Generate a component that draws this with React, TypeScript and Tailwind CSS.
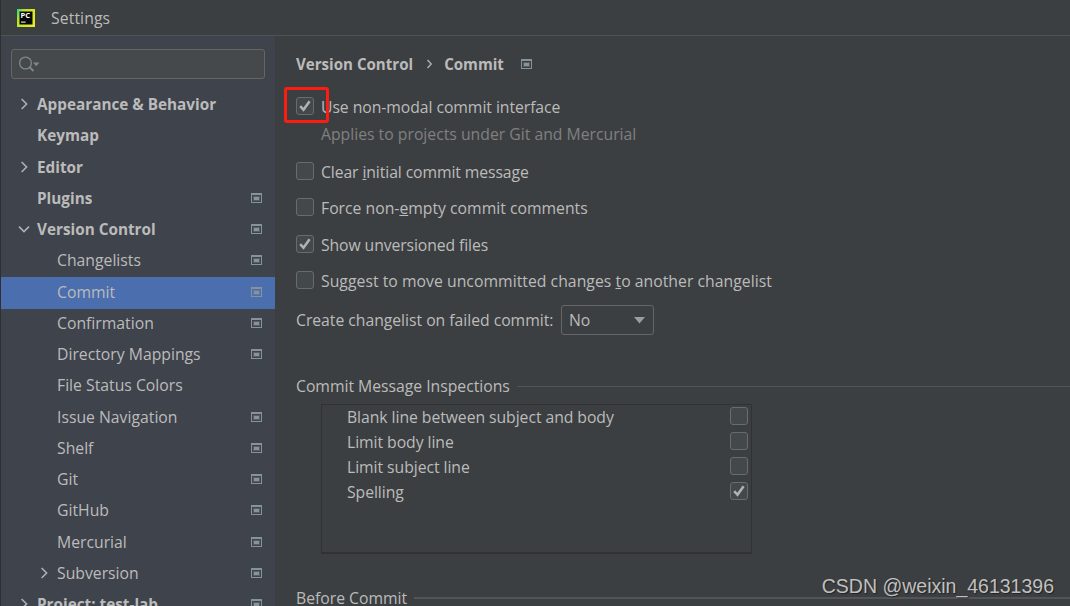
import React from "react";

type TreeItem = {
  label: string;
  level?: number;
  bold?: boolean;
  arrow?: "right" | "down";
  project?: boolean;
  selected?: boolean;
};

const treeItems: TreeItem[] = [
  { label: "Appearance & Behavior", bold: true, arrow: "right" },
  { label: "Keymap", bold: true },
  { label: "Editor", bold: true, arrow: "right" },
  { label: "Plugins", bold: true, project: true },
  { label: "Version Control", bold: true, arrow: "down", project: true },
  { label: "Changelists", level: 1, project: true },
  { label: "Commit", level: 1, project: true, selected: true },
  { label: "Confirmation", level: 1, project: true },
  { label: "Directory Mappings", level: 1, project: true },
  { label: "File Status Colors", level: 1 },
  { label: "Issue Navigation", level: 1, project: true },
  { label: "Shelf", level: 1, project: true },
  { label: "Git", level: 1, project: true },
  { label: "GitHub", level: 1, project: true },
  { label: "Mercurial", level: 1, project: true },
  { label: "Subversion", level: 1, arrow: "right", project: true },
  { label: "Project: test-lab", bold: true, arrow: "right", project: true },
];

const inspections = [
  { label: "Blank line between subject and body", checked: false },
  { label: "Limit body line", checked: false },
  { label: "Limit subject line", checked: false },
  { label: "Spelling", checked: true },
];

const PyCharmLogo = () => (
  <svg width="18" height="18" viewBox="0 0 18 18" className="shrink-0">
    <defs>
      <linearGradient id="pc" x1="0" y1="0" x2="1" y2="0.6">
        <stop offset="0" stopColor="#21d789" />
        <stop offset="0.3" stopColor="#b5e32c" />
        <stop offset="1" stopColor="#e6ea2b" />
      </linearGradient>
    </defs>
    <rect width="18" height="18" fill="url(#pc)" />
    <rect x="2.5" y="2.5" width="13" height="13" fill="#050805" />
    <text x="3.6" y="9" fontSize="7.6" fontWeight="700" fill="#fff" fontFamily="Open Sans, sans-serif">
      PC
    </text>
    <rect x="4" y="12.6" width="4.6" height="1" fill="#fff" />
  </svg>
);

const ProjectIcon = () => (
  <svg width="11" height="10" viewBox="0 0 11 10" className="shrink-0">
    <rect x="0.5" y="0.5" width="10" height="9" fill="none" stroke="#87939a" />
    <rect x="1" y="1" width="9" height="1" fill="#87939a" />
    <rect x="3" y="4" width="5" height="3" fill="#87939a" />
    <rect x="2.5" y="3.5" width="6" height="4" fill="none" stroke="#87939a" strokeOpacity="0.35" />
  </svg>
);

const Arrow = ({ dir }: { dir: "right" | "down" }) => (
  <svg width="12" height="12" viewBox="0 0 12 12" fill="none" stroke="#adb0b2" strokeWidth="1.6" className="shrink-0">
    {dir === "right" ? <path d="M3.6 1 8.6 6 3.6 11" /> : <path d="M1 3.6 6 8.6 11 3.6" />}
  </svg>
);

const Checkbox = ({ checked }: { checked?: boolean }) => (
  <span className="flex size-[18px] shrink-0 items-center justify-center rounded-[3px] border border-[#6b6b6b] bg-[#43494a]">
    {checked && (
      <svg width="16" height="16" viewBox="0 0 16 16" fill="none" stroke="#b0b2b3" strokeWidth="2.5">
        <path d="M3.2 8.1 6.5 11.8 12.6 3.2" />
      </svg>
    )}
  </span>
);

const Option = ({ checked, children }: { checked?: boolean; children: React.ReactNode }) => (
  <div className="flex h-[36.25px] items-center gap-[7px]">
    <Checkbox checked={checked} />
    <span className="pt-0.5">{children}</span>
  </div>
);

const Section = ({ title, line }: { title: string; line: string }) => (
  <div className="flex h-6 items-center gap-[7px]">
    <span className="tracking-[-0.02px]">{title}</span>
    <span className={`flex-1 bg-[#525557] ${line}`} />
  </div>
);

const Sidebar = () => (
  <aside className="w-[274px] shrink-0 overflow-hidden bg-[#3f434c]">
    <div className="mx-2.5 mt-[13px] flex h-[30px] items-center rounded-[3px] border border-[#646767] bg-[#45494a] px-[7px]">
      <svg width="22" height="16" viewBox="0 0 22 16" fill="none" stroke="#7c8890" strokeWidth="1.3">
        <circle cx="6.5" cy="7" r="5.9" />
        <path d="M10.4 11 14.5 15" strokeWidth="1.8" />
        <path d="M14 6.5h6.4l-3.2 3.8z" fill="#7c8890" stroke="none" />
      </svg>
    </div>
    <ul className="mt-[10.5px]">
      {treeItems.map((item) => (
        <li
          key={item.label}
          className={`flex items-center pr-[13px] ${
            item.selected ? "-mb-[0.75px] h-8 bg-[#4b6eaf] pb-[2.75px]" : "h-[31.25px] pb-0.5"
          } ${item.level ? "pl-[37px]" : "pl-[17px]"}`}
        >
          <span className="flex w-[19px] shrink-0">{item.arrow && <Arrow dir={item.arrow} />}</span>
          <span className={`flex-1 whitespace-nowrap ${item.bold ? "text-[15.3px] font-bold" : ""}`}>{item.label}</span>
          {item.project && <ProjectIcon />}
        </li>
      ))}
    </ul>
  </aside>
);

const App = () => {
  return (
    <div className="relative flex h-[606px] w-[1070px] flex-col overflow-hidden border-l border-[#2e3032] bg-[#3c3f41] font-['Open_Sans',sans-serif] text-[15.75px] leading-5 text-[#bbbbbb]">
      <header className="flex h-9 shrink-0 items-center gap-4 border-b border-[#505355] pl-4">
        <PyCharmLogo />
        <span className="tracking-[0.1px]">Settings</span>
      </header>

      <div className="flex min-h-0 flex-1">
        <Sidebar />

        <main className="min-w-0 flex-1 overflow-hidden pl-[21px]">
          <div className="mt-[17px] flex h-[22px] items-center text-[15.1px] font-bold">
            <span>Version Control</span>
            <svg width="7" height="10" viewBox="0 0 7 10" fill="none" stroke="#adb0b2" strokeWidth="1.4" className="ml-[13px] mr-[11px]">
              <path d="M1.5 1 5.2 5 1.5 9" />
            </svg>
            <span className="mr-[17px]">Commit</span>
            <ProjectIcon />
          </div>

          <div className="relative mt-[13px]">
            <Option checked>
              <span className="tracking-[-0.06px]">Use non-modal commit interface</span>
            </Option>
            <div className="absolute -left-3 top-[-1px] h-9 w-[45px] rounded-[3px] border-3 border-[#fb1e10]" />
          </div>
          <p className="pl-[25px] text-[#808080]">Applies to projects under Git and Mercurial</p>
          <div className="mt-[8.75px]">
            <Option>
              <span className="tracking-[-0.1px]">
                Clear <u>i</u>nitial commit message
              </span>
            </Option>
            <Option>
              Force non-<u>e</u>mpty commit comments
            </Option>
            <Option checked>
              <span className="tracking-[-0.1px]">Show unversioned files</span>
            </Option>
            <Option>
              <span className="tracking-[0.03px]">
                Suggest to move uncommitted changes <u>t</u>o another changelist
              </span>
            </Option>
          </div>

          <div className="mt-[7px] flex items-center">
            <span className="w-[265px] whitespace-nowrap tracking-[-0.03px]">Create changelist on failed commit:</span>
            <div className="flex h-[30px] w-[93px] items-center justify-between rounded-[3px] border border-[#646667] pl-[7px] pr-2">
              <span>No</span>
              <svg width="11" height="7" viewBox="0 0 11 7" fill="#9a9da0">
                <path d="M0 0h11L5.5 6.5z" />
              </svg>
            </div>
          </div>

          <div className="mt-[39px]">
            <Section title="Commit Message Inspections" line="h-px" />
          </div>
          <ul className="ml-[25px] mt-1.5 h-[150px] w-[431px] border border-b-2 border-[#323232]">
            {inspections.map((item) => (
              <li key={item.label} className="flex h-[25px] items-start justify-between pl-[25px] pr-[3px] pt-0.5">
                <span className="tracking-[-0.06px]">{item.label}</span>
                <Checkbox checked={item.checked} />
              </li>
            ))}
          </ul>
          <div className="mt-8">
            <Section title="Before Commit" line="h-0.5" />
          </div>
        </main>
      </div>

      <div className="absolute bottom-2 right-4 font-['Liberation_Sans',sans-serif] text-[19.5px] leading-6 text-[#c0c0c0] [text-shadow:1px_1px_1px_#222]">
        CSDN @weixin_46131396
      </div>
    </div>
  );
};

export default App;
